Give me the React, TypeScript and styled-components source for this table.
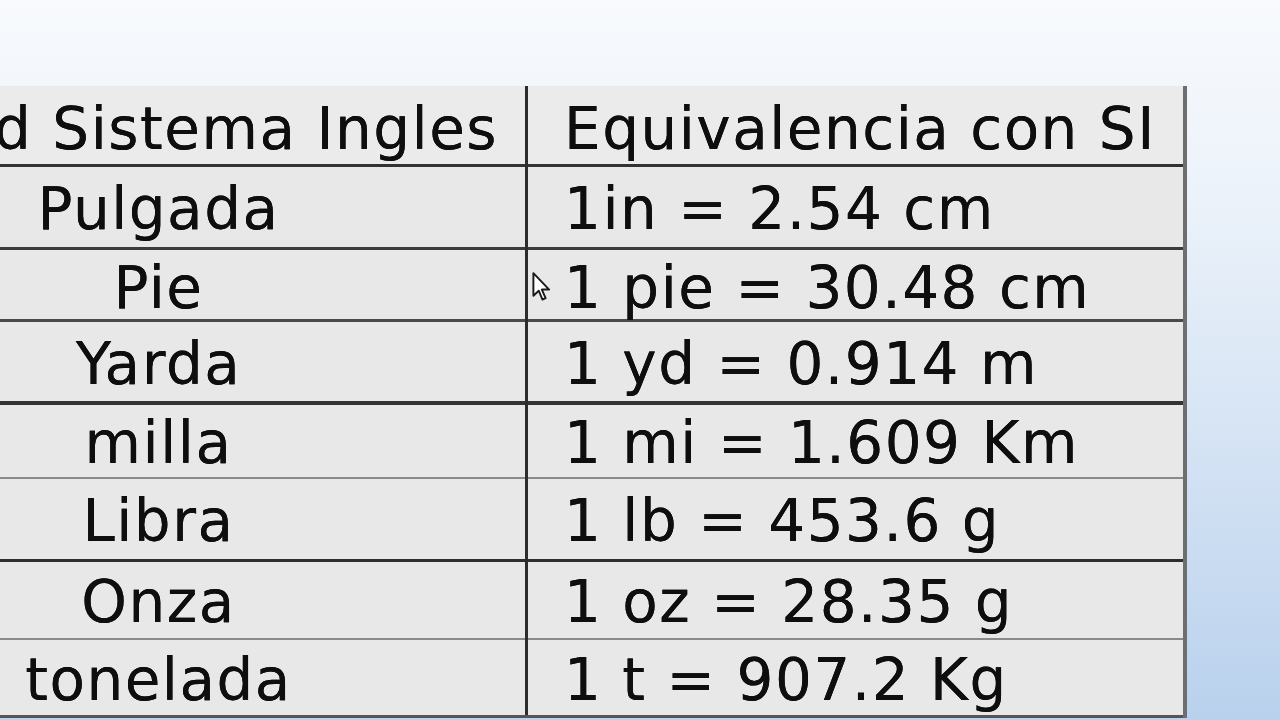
import React from 'react'
import styled, {createGlobalStyle} from 'styled-components'

const GlobalStyle = createGlobalStyle`
    html, body {
        margin: 0;
        padding: 0;
    }
    body {
        font-family: "DejaVu Sans", "Liberation Sans", sans-serif;
        background: #f5f8fc;
    }
`

const Page = styled.div`
    position: relative;
    width: 1280px;
    height: 720px;
    overflow: hidden;
    background: linear-gradient(180deg, #f8fafd 0%, #edf3fa 25%, #d6e4f4 60%, #b9d1ed 100%);
`

const Table = styled.div`
    margin-top: 86px;
    margin-left: -208px;
    width: 1395px;
    border-right: 4px solid #6e6e6e;
    box-sizing: border-box;
    background: #e9e9e9;
`

const Row = styled.div<{$h: number; $line: number; $tone: string; $head?: boolean}>`
    display: grid;
    grid-template-columns: 736px 1fr;
    height: ${(p) => p.$h}px;
    padding-top: ${(p) => (p.$head ? 8 : 4)}px;
    border-bottom: ${(p) => p.$line}px solid ${(p) => p.$tone};
    box-sizing: border-box;
    background: ${(p) => (p.$head ? '#ebebeb' : '#e8e8e8')};
    font-size: 58px;
    letter-spacing: 1.5px;
    color: #0e0e0e;
    text-shadow: 0 0 0.6px #000;
`

const NameCell = styled.div`
    display: flex;
    align-items: center;
    justify-content: center;
    margin-top: -8px;
    padding-top: 8px;
    border-right: 3px solid #2c2c2c;
    white-space: nowrap;
`

const EquivCell = styled.div`
    display: flex;
    align-items: center;
    padding-left: 36px;
    white-space: nowrap;
`

const Cursor = styled.svg`
    position: absolute;
    left: 532px;
    top: 272px;
`

const rows = [
    {name: 'Pulgada', equiv: '1in = 2.54 cm', h: 83, line: 3, tone: '#3a3a3a'},
    {name: 'Pie', equiv: '1 pie = 30.48 cm', h: 72, line: 3, tone: '#4a4a4a'},
    {name: 'Yarda', equiv: '1 yd = 0.914 m', h: 83, line: 4, tone: '#333'},
    {name: 'milla', equiv: '1 mi = 1.609 Km', h: 74, line: 2, tone: '#8a8a8a'},
    {name: 'Libra', equiv: '1 lb = 453.6 g', h: 83, line: 3, tone: '#2e2e2e'},
    {name: 'Onza', equiv: '1 oz = 28.35 g', h: 78, line: 2, tone: '#8a8a8a'},
    {name: 'tonelada', equiv: '1 t = 907.2 Kg', h: 78, line: 3, tone: '#555'},
]

export default function App() {
    return (
        <Page>
            <GlobalStyle />
            <Table>
                <Row $head $h={81} $line={3} $tone="#333">
                    <NameCell>Unidad Sistema Ingles</NameCell>
                    <EquivCell>Equivalencia con SI</EquivCell>
                </Row>
                {rows.map((r) => (
                    <Row key={r.name} $h={r.h} $line={r.line} $tone={r.tone}>
                        <NameCell>{r.name}</NameCell>
                        <EquivCell>{r.equiv}</EquivCell>
                    </Row>
                ))}
            </Table>
            {/* mouse pointer caught in the capture */}
            <Cursor width="19" height="29" viewBox="0 0 12.5 19.5">
                <path d="M0.8 0.8 L0.8 16 L4.4 12.6 L6.9 18.5 L9 17.6 L6.5 11.8 L11.4 11.8 Z" fill="#fff" stroke="#1a1a1a" strokeWidth="1.3" strokeLinejoin="round" />
            </Cursor>
        </Page>
    )
}
